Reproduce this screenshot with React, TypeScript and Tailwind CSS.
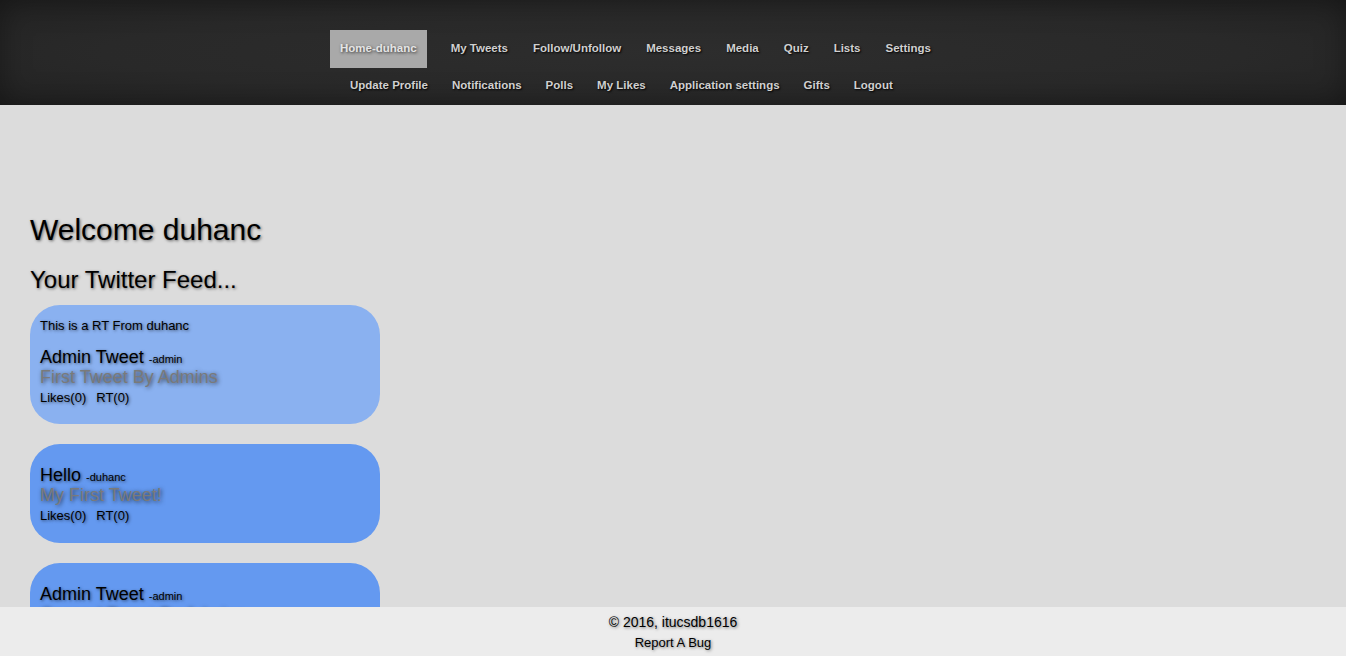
const row1 = ['My Tweets', 'Follow/Unfollow', 'Messages', 'Media', 'Quiz', 'Lists', 'Settings'];
const row2 = ['Update Profile', 'Notifications', 'Polls', 'My Likes', 'Application settings', 'Gifts', 'Logout'];

const tweets = [
  { rt: 'duhanc', title: 'Admin Tweet', user: 'admin', body: 'First Tweet By Admins', light: true },
  { rt: null, title: 'Hello', user: 'duhanc', body: 'My First Tweet!', light: false },
  { rt: null, title: 'Admin Tweet', user: 'admin', body: 'Second Tweet By Admins', light: false },
];

function NavItem({ label }: { label: string }) {
  return (
    <a className="px-[10px] text-[11.5px] font-bold text-[#d0d0d0] [text-shadow:1px_1px_2px_#000] cursor-pointer">
      {label}
    </a>
  );
}

export default function App() {
  return (
    <div className="min-h-screen bg-[#dcdcdc] font-['Liberation_Sans',Arial,sans-serif] text-black">
      <header className="h-[105px] bg-[radial-gradient(ellipse_at_center,#2d2d2d_0%,#292929_60%,#222222_100%)] shadow-[inset_0_0_30px_rgba(0,0,0,0.35)]">
        <div className="flex pl-[330px] pt-[30px] items-center">
          <a className="h-[38px] px-[10px] flex items-center bg-[#a9a9a9] text-[11.5px] font-bold text-[#e4e4e4] [text-shadow:1px_1px_3px_#333] mr-[14px]">
            Home-duhanc
          </a>
          <div className="flex gap-[5px] pb-[1px]">
            {row1.map((l) => (
              <NavItem key={l} label={l} />
            ))}
          </div>
        </div>
        <div className="flex gap-[4px] pl-[340px] mt-[9px]">
          {row2.map((l) => (
            <NavItem key={l} label={l} />
          ))}
        </div>
      </header>

      <main className="px-[30px] pt-[107px] pb-[60px] [text-shadow:1px_1px_3px_rgba(0,0,0,0.55)]">
        <h1 className="text-[30px] leading-[35px]">Welcome duhanc</h1>
        <h2 className="text-[24px] leading-[28px] mt-[19px]">Your Twitter Feed...</h2>
        <div className="mt-[11px] flex flex-col gap-[20px]">
          {tweets.map((t, i) => (
            <div
              key={i}
              className={`w-[350px] rounded-[30px] px-[10px] ${t.light ? 'bg-[#8ab1f0] pt-[13px] pb-[18px]' : 'bg-[#6499f0] pt-[21px] pb-[19px]'}`}
            >
              {t.rt && <div className="text-[13px] leading-[15px] mb-[14px]">This is a RT From {t.rt}</div>}
              <div className="text-[18px] leading-[20px]">
                {t.title} <span className="text-[11px] leading-none">-{t.user}</span>
              </div>
              <div className="text-[18px] leading-[20px] text-[#7a7a7a] [text-shadow:1px_1px_4px_rgba(0,0,0,0.7)]">{t.body}</div>
              <div className="text-[13px] leading-[16px] mt-[3px] flex gap-[10px]">
                <span>Likes(0)</span>
                <span>RT(0)</span>
              </div>
            </div>
          ))}
        </div>
      </main>

      <footer className="fixed bottom-0 left-0 right-0 h-[49px] bg-[#ececec] flex flex-col items-center pt-[7px] [text-shadow:1px_1px_3px_rgba(0,0,0,0.5)]">
        <div className="text-[14px] leading-[16px]">© 2016, itucsdb1616</div>
        <div className="text-[13px] leading-[15px] mt-[5px]">Report A Bug</div>
      </footer>
    </div>
  );
}
